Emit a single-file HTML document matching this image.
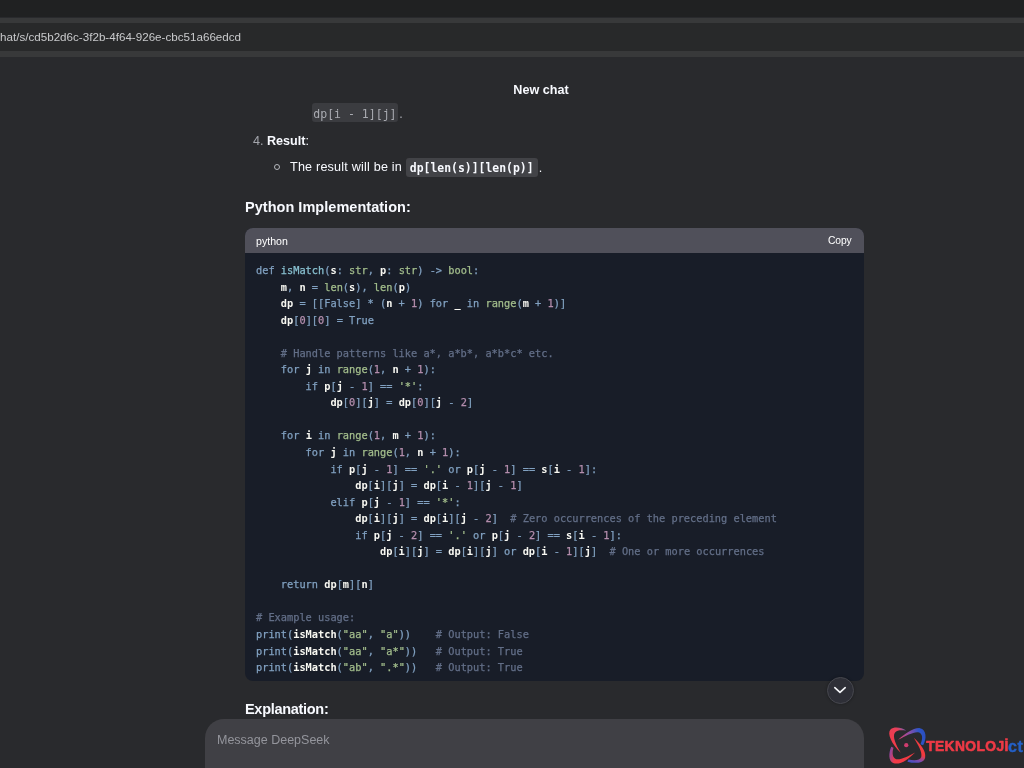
<!DOCTYPE html>
<html lang="en">
<head>
<meta charset="utf-8">
<title>New chat</title>
<style>
*{box-sizing:border-box;margin:0;padding:0}
html,body{width:1024px;height:768px;overflow:hidden;background:#292a2d}
body{position:relative;font-family:"Liberation Sans",sans-serif;color:#f8faff}
.abs{position:absolute;white-space:nowrap;will-change:transform}
/* browser chrome */
#tabstrip{left:0;top:0;width:1024px;height:17px;background:#202122}
#bar1{left:0;top:17.5px;width:1024px;height:5.5px;background:#38393a}
#urlrow{left:0;top:23px;width:1024px;height:28px;background:#28292a}
#bar2{left:0;top:51px;width:1024px;height:5.6px;background:#38393a}
#url{left:-0.5px;top:30.4px;font-size:11.63px;line-height:14px;color:#c9cacc;letter-spacing:0}
/* header */
#title{left:441px;top:81px;width:200px;text-align:center;font-size:12.6px;line-height:18px;font-weight:bold;color:#f8faff}
/* prose */
.txt{font-size:12.6px;line-height:18px;color:#f8faff}
code.inl{display:inline-block;vertical-align:top;font-family:"DejaVu Sans Mono","Liberation Mono",monospace;font-size:11.4px;height:19.3px;line-height:19px;background:#424347;border-radius:3px;color:#f8faff}
h3{font-size:14.5px;line-height:20px;font-weight:bold;color:#f8faff}
/* code block */
#cb{left:245.2px;top:228.3px;width:618.6px;height:452.5px;border-radius:8px;background:#181d28;overflow:hidden}
#cbh{left:0;top:0;width:619px;height:25.3px;background:#50505a}
#lang{left:11.2px;top:5.7px;font-size:10.6px;line-height:14px;color:#fff}
#copy{left:583.2px;top:5.7px;font-size:10.3px;line-height:14px;color:#fff;letter-spacing:-0.1px}
pre{position:absolute;left:11.1px;top:33.7px;will-change:transform;font-family:"DejaVu Sans Mono","Liberation Mono",monospace;font-size:10.315px;line-height:16.54px;color:#81a1c1;white-space:pre;-webkit-text-stroke:0.25px}
pre .k{color:#81a1c1}
pre .f{color:#88c0d0}
pre .v{color:#f8f8f2;font-weight:bold;-webkit-text-stroke:0}
pre .b{color:#a3be8c}
pre .s{color:#a3be8c}
pre .n{color:#b48ead}
pre .c{color:#636f88}
pre .p{color:#81a1c1}
/* floating */
#down{left:827px;top:676.6px;width:27.2px;height:27.2px;border-radius:50%;background:#2e2f37;border:1.8px solid #47484f;box-shadow:0 0 3px rgba(0,0,0,.35)}
#input{left:205px;top:718.7px;width:659px;height:80px;border-radius:19px;background:#404045}
#ph{left:12.4px;top:12px;font-size:12.5px;line-height:18px;color:#94959c}
</style>
</head>
<body>
<div class="abs" id="tabstrip"></div>
<div class="abs" id="bar1"></div>
<div class="abs" id="urlrow"></div>
<div class="abs" id="bar2"></div>
<div class="abs" id="url">hat/s/cd5b2d6c-3f2b-4f64-926e-cbc51a66edcd</div>

<div class="abs" id="title">New chat</div>

<div class="abs txt" id="l1" style="left:311.8px;top:103px;line-height:19.3px;color:#a9abb1"><code class="inl" style="padding:0 1.3px;font-size:11.53px;line-height:22.6px;background:#3b3c40;color:#a9abb1">dp[i - 1][j]</code><span style="margin-left:1.5px;position:relative;top:2px">.</span></div>
<div class="abs txt" id="l2" style="left:253px;top:132px"><span style="color:#a3a5ac">4.</span> <b>Result</b>:</div>
<div class="abs" id="bul" style="left:274.2px;top:164.2px;width:6px;height:6px;border:1px solid #b4b6bc;border-radius:50%"></div>
<div class="abs txt" id="l3" style="left:290px;top:157.6px;line-height:19.3px;letter-spacing:0.2px">The result will be in<code class="inl" style="margin-left:3.9px;padding:0 4.2px 0 3.9px;font-size:11.43px;line-height:21px;letter-spacing:0"><b>dp[len(s)][len(p)]</b></code><span style="margin-left:1px;position:relative;top:1px">.</span></div>
<h3 class="abs" id="h1" style="left:244.5px;top:197px;letter-spacing:0.03px">Python Implementation:</h3>

<div class="abs" id="cb">
<div class="abs" id="cbh"></div>
<div class="abs" id="lang">python</div>
<div class="abs" id="copy">Copy</div>
<pre><span class="k">def</span> <span class="f">isMatch</span>(<span class="v">s</span>: <span class="b">str</span>, <span class="v">p</span>: <span class="b">str</span>) -&gt; <span class="b">bool</span>:
    <span class="v">m</span>, <span class="v">n</span> = <span class="b">len</span>(<span class="v">s</span>), <span class="b">len</span>(<span class="v">p</span>)
    <span class="v">dp</span> = [[<span class="k">False</span>] * (<span class="v">n</span> + <span class="n">1</span>) <span class="k">for</span> <span class="v">_</span> <span class="k">in</span> <span class="b">range</span>(<span class="v">m</span> + <span class="n">1</span>)]
    <span class="v">dp</span>[<span class="n">0</span>][<span class="n">0</span>] = <span class="k">True</span>

    <span class="c"># Handle patterns like a*, a*b*, a*b*c* etc.</span>
    <span class="k">for</span> <span class="v">j</span> <span class="k">in</span> <span class="b">range</span>(<span class="n">1</span>, <span class="v">n</span> + <span class="n">1</span>):
        <span class="k">if</span> <span class="v">p</span>[<span class="v">j</span> - <span class="n">1</span>] == <span class="s">'*'</span>:
            <span class="v">dp</span>[<span class="n">0</span>][<span class="v">j</span>] = <span class="v">dp</span>[<span class="n">0</span>][<span class="v">j</span> - <span class="n">2</span>]

    <span class="k">for</span> <span class="v">i</span> <span class="k">in</span> <span class="b">range</span>(<span class="n">1</span>, <span class="v">m</span> + <span class="n">1</span>):
        <span class="k">for</span> <span class="v">j</span> <span class="k">in</span> <span class="b">range</span>(<span class="n">1</span>, <span class="v">n</span> + <span class="n">1</span>):
            <span class="k">if</span> <span class="v">p</span>[<span class="v">j</span> - <span class="n">1</span>] == <span class="s">'.'</span> <span class="k">or</span> <span class="v">p</span>[<span class="v">j</span> - <span class="n">1</span>] == <span class="v">s</span>[<span class="v">i</span> - <span class="n">1</span>]:
                <span class="v">dp</span>[<span class="v">i</span>][<span class="v">j</span>] = <span class="v">dp</span>[<span class="v">i</span> - <span class="n">1</span>][<span class="v">j</span> - <span class="n">1</span>]
            <span class="k">elif</span> <span class="v">p</span>[<span class="v">j</span> - <span class="n">1</span>] == <span class="s">'*'</span>:
                <span class="v">dp</span>[<span class="v">i</span>][<span class="v">j</span>] = <span class="v">dp</span>[<span class="v">i</span>][<span class="v">j</span> - <span class="n">2</span>]  <span class="c"># Zero occurrences of the preceding element</span>
                <span class="k">if</span> <span class="v">p</span>[<span class="v">j</span> - <span class="n">2</span>] == <span class="s">'.'</span> <span class="k">or</span> <span class="v">p</span>[<span class="v">j</span> - <span class="n">2</span>] == <span class="v">s</span>[<span class="v">i</span> - <span class="n">1</span>]:
                    <span class="v">dp</span>[<span class="v">i</span>][<span class="v">j</span>] = <span class="v">dp</span>[<span class="v">i</span>][<span class="v">j</span>] <span class="k">or</span> <span class="v">dp</span>[<span class="v">i</span> - <span class="n">1</span>][<span class="v">j</span>]  <span class="c"># One or more occurrences</span>

    <span class="k">return</span> <span class="v">dp</span>[<span class="v">m</span>][<span class="v">n</span>]

<span class="c"># Example usage:</span>
<span class="k">print</span>(<span class="v">isMatch</span>(<span class="s">"aa"</span>, <span class="s">"a"</span>))    <span class="c"># Output: False</span>
<span class="k">print</span>(<span class="v">isMatch</span>(<span class="s">"aa"</span>, <span class="s">"a*"</span>))   <span class="c"># Output: True</span>
<span class="k">print</span>(<span class="v">isMatch</span>(<span class="s">"ab"</span>, <span class="s">".*"</span>))   <span class="c"># Output: True</span></pre>
</div>

<div class="abs" id="down"><svg width="23.6" height="23.6" viewBox="0 0 23.6 23.6" style="display:block"><path d="M6.8 9.7 L12 14.3 L17.2 9.7" fill="none" stroke="#f4f5f8" stroke-width="1.7" stroke-linecap="round" stroke-linejoin="round"/></svg></div>

<h3 class="abs" id="h2" style="left:244.5px;top:699px;letter-spacing:-0.3px">Explanation:</h3>

<div class="abs" id="input"><div class="abs" id="ph">Message DeepSeek</div></div>

<div class="abs" id="wm" style="left:880px;top:720px;width:144px;height:48px">
<svg width="144" height="48" viewBox="0 0 144 48">
<defs>
<linearGradient id="g1" gradientUnits="userSpaceOnUse" x1="150" y1="400" x2="430" y2="150"><stop offset="0" stop-color="#f23a45"/><stop offset=".7" stop-color="#e8405a"/><stop offset="1" stop-color="#5a5fb8"/></linearGradient>
<linearGradient id="g2" gradientUnits="userSpaceOnUse" x1="290" y1="315" x2="720" y2="250"><stop offset="0" stop-color="#e0406a"/><stop offset=".45" stop-color="#8a4fa8"/><stop offset=".8" stop-color="#2f55c8"/><stop offset="1" stop-color="#2a4fc0"/></linearGradient>
<linearGradient id="g3" gradientUnits="userSpaceOnUse" x1="600" y1="300" x2="470" y2="690"><stop offset="0" stop-color="#f03c40"/><stop offset=".55" stop-color="#f23a3e"/><stop offset=".8" stop-color="#7a4bb0"/><stop offset="1" stop-color="#3050c8"/></linearGradient>
<linearGradient id="g4" gradientUnits="userSpaceOnUse" x1="520" y1="560" x2="170" y2="440"><stop offset="0" stop-color="#f03a40"/><stop offset=".65" stop-color="#f23a48"/><stop offset="1" stop-color="#8a48a8"/></linearGradient>
</defs>
<g transform="scale(0.0625)">
<path fill="url(#g1)" d="M420,172 C350,118 225,100 168,150 C108,212 185,385 332,522 C255,400 195,262 238,202 C272,160 350,160 420,172 Z"/>
<path fill="url(#g2)" d="M290,315 C400,220 540,118 640,130 C745,150 752,300 690,402 L648,386 C692,292 682,212 612,196 C540,184 420,250 290,315 Z"/>
<path fill="url(#g3)" d="M540,285 C645,380 742,500 722,602 C700,694 560,702 438,666 L455,630 C540,650 640,652 660,590 C680,520 612,400 540,285 Z"/>
<path fill="url(#g4)" d="M562,518 C460,620 330,722 220,692 C128,660 140,520 180,428 L216,445 C190,530 200,610 260,626 C330,640 450,580 562,518 Z"/>
<circle cx="420" cy="402" r="34" fill="#cf3c6e"/>
</g>
<text x="46.2" y="31.1" font-family="Liberation Sans, sans-serif" font-weight="bold" font-size="13.8" fill="#ee3a46" stroke="#ee3a46" stroke-width="0.6" stroke-linejoin="round" letter-spacing="0.4">TEKNOLOJİ</text>
<text x="128" y="31.8" letter-spacing="0.6" font-family="Liberation Sans, sans-serif" font-weight="bold" font-size="16" fill="#2460c6" stroke="#2460c6" stroke-width="0.4">ct</text>
</svg>
</div>
</body>
</html>
